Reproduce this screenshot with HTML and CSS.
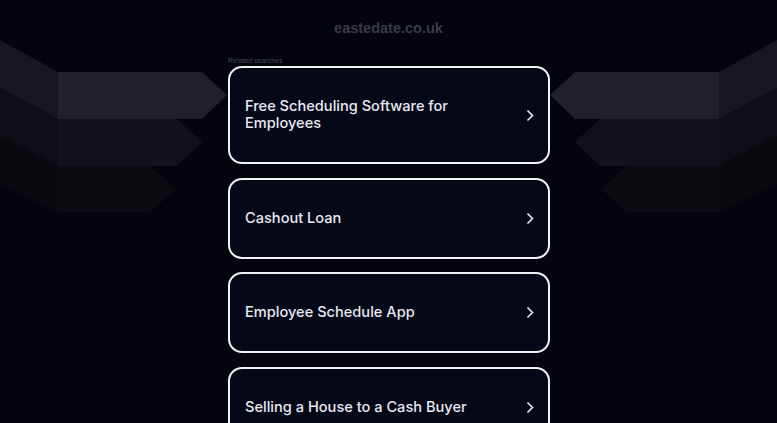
FILE: index.html
```html
<!DOCTYPE html>
<html>
<head>
    <link rel="stylesheet" href="styles.css">
</head>
<body>
    <!-- Background arrows -->
    <svg class="backdrop" width="777" height="423" viewBox="0 0 777 423">
        <!-- left side -->
        <polygon points="0,40 58,72 58,119 0,88" fill="#16171f"/>
        <polygon points="0,88 58,119 58,166 0,136" fill="#0e0f16"/>
        <polygon points="0,136 58,166 58,212 0,183" fill="#090a10"/>
        <polygon points="58,166 150,166 176,189 150,212 58,212" fill="#0b0c12"/>
        <polygon points="58,119 177,119 202,142 177,166 58,166" fill="#111219"/>
        <polygon points="58,72 202,72 227,95 202,119 58,119" fill="#1f2029"/>
        <!-- right side -->
        <polygon points="777,40 719,72 719,119 777,88" fill="#16171f"/>
        <polygon points="777,88 719,119 719,166 777,136" fill="#0e0f16"/>
        <polygon points="777,136 719,166 719,212 777,183" fill="#090a10"/>
        <polygon points="719,166 627,166 601,189 627,212 719,212" fill="#0b0c12"/>
        <polygon points="719,119 600,119 575,142 600,166 719,166" fill="#111219"/>
        <polygon points="719,72 575,72 550,95 575,119 719,119" fill="#1f2029"/>
    </svg>

    <div class="page">
        <div class="domain">eastedate.co.uk</div>

        <div class="related">
            <div class="related-title">Related searches</div>

            <a class="search-card" href="#">
                <span class="search-text">Free Scheduling Software for Employees</span>
                <svg class="chevron" width="8" height="13" viewBox="0 0 8 13"><path d="M1.5 1.5 L6.5 6.5 L1.5 11.5" fill="none" stroke="#e8e8ef" stroke-width="1.6"/></svg>
            </a>

            <a class="search-card" href="#">
                <span class="search-text">Cashout Loan</span>
                <svg class="chevron" width="8" height="13" viewBox="0 0 8 13"><path d="M1.5 1.5 L6.5 6.5 L1.5 11.5" fill="none" stroke="#e8e8ef" stroke-width="1.6"/></svg>
            </a>

            <a class="search-card" href="#">
                <span class="search-text">Employee Schedule App</span>
                <svg class="chevron" width="8" height="13" viewBox="0 0 8 13"><path d="M1.5 1.5 L6.5 6.5 L1.5 11.5" fill="none" stroke="#e8e8ef" stroke-width="1.6"/></svg>
            </a>

            <a class="search-card" href="#">
                <span class="search-text">Selling a House to a Cash Buyer</span>
                <svg class="chevron" width="8" height="13" viewBox="0 0 8 13"><path d="M1.5 1.5 L6.5 6.5 L1.5 11.5" fill="none" stroke="#e8e8ef" stroke-width="1.6"/></svg>
            </a>
        </div>
    </div>
</body>
</html>
```

FILE: styles.css
```css
body {
    margin: 0;
    background-color: #03040e;
    font-family: "Liberation Sans", Arial, sans-serif;
    height: 423px;
    overflow: hidden;
    position: relative;
}

.backdrop {
    position: absolute;
    left: 0;
    top: 0;
}

.page {
    position: relative;
    display: flex;
    flex-direction: column;
    align-items: center;
}

.domain {
    margin-top: 20px;
    font-size: 14.5px;
    line-height: 17px;
    font-weight: bold;
    color: #3a3b44;
}

.related {
    width: 322px;
    margin-top: 19px;
    margin-left: 1px;
    display: flex;
    flex-direction: column;
    gap: 13.5px;
}

.related-title {
    font-size: 7px;
    line-height: 9px;
    color: #44454e;
    margin-bottom: -12.5px;
}

.search-card {
    display: flex;
    align-items: center;
    padding: 30px 14px 30px 15px;
    background: #040817;
    border: 2px solid #f2f2f6;
    border-radius: 14px;
    text-decoration: none;
}

.search-text {
    flex: 1;
    padding-right: 40px;
    font-family: Inter, "Liberation Sans", sans-serif;
    font-size: 14.6px;
    font-weight: 500;
    line-height: 17px;
    color: #e8e8ef;
}

.chevron {
    flex: none;
}
```
